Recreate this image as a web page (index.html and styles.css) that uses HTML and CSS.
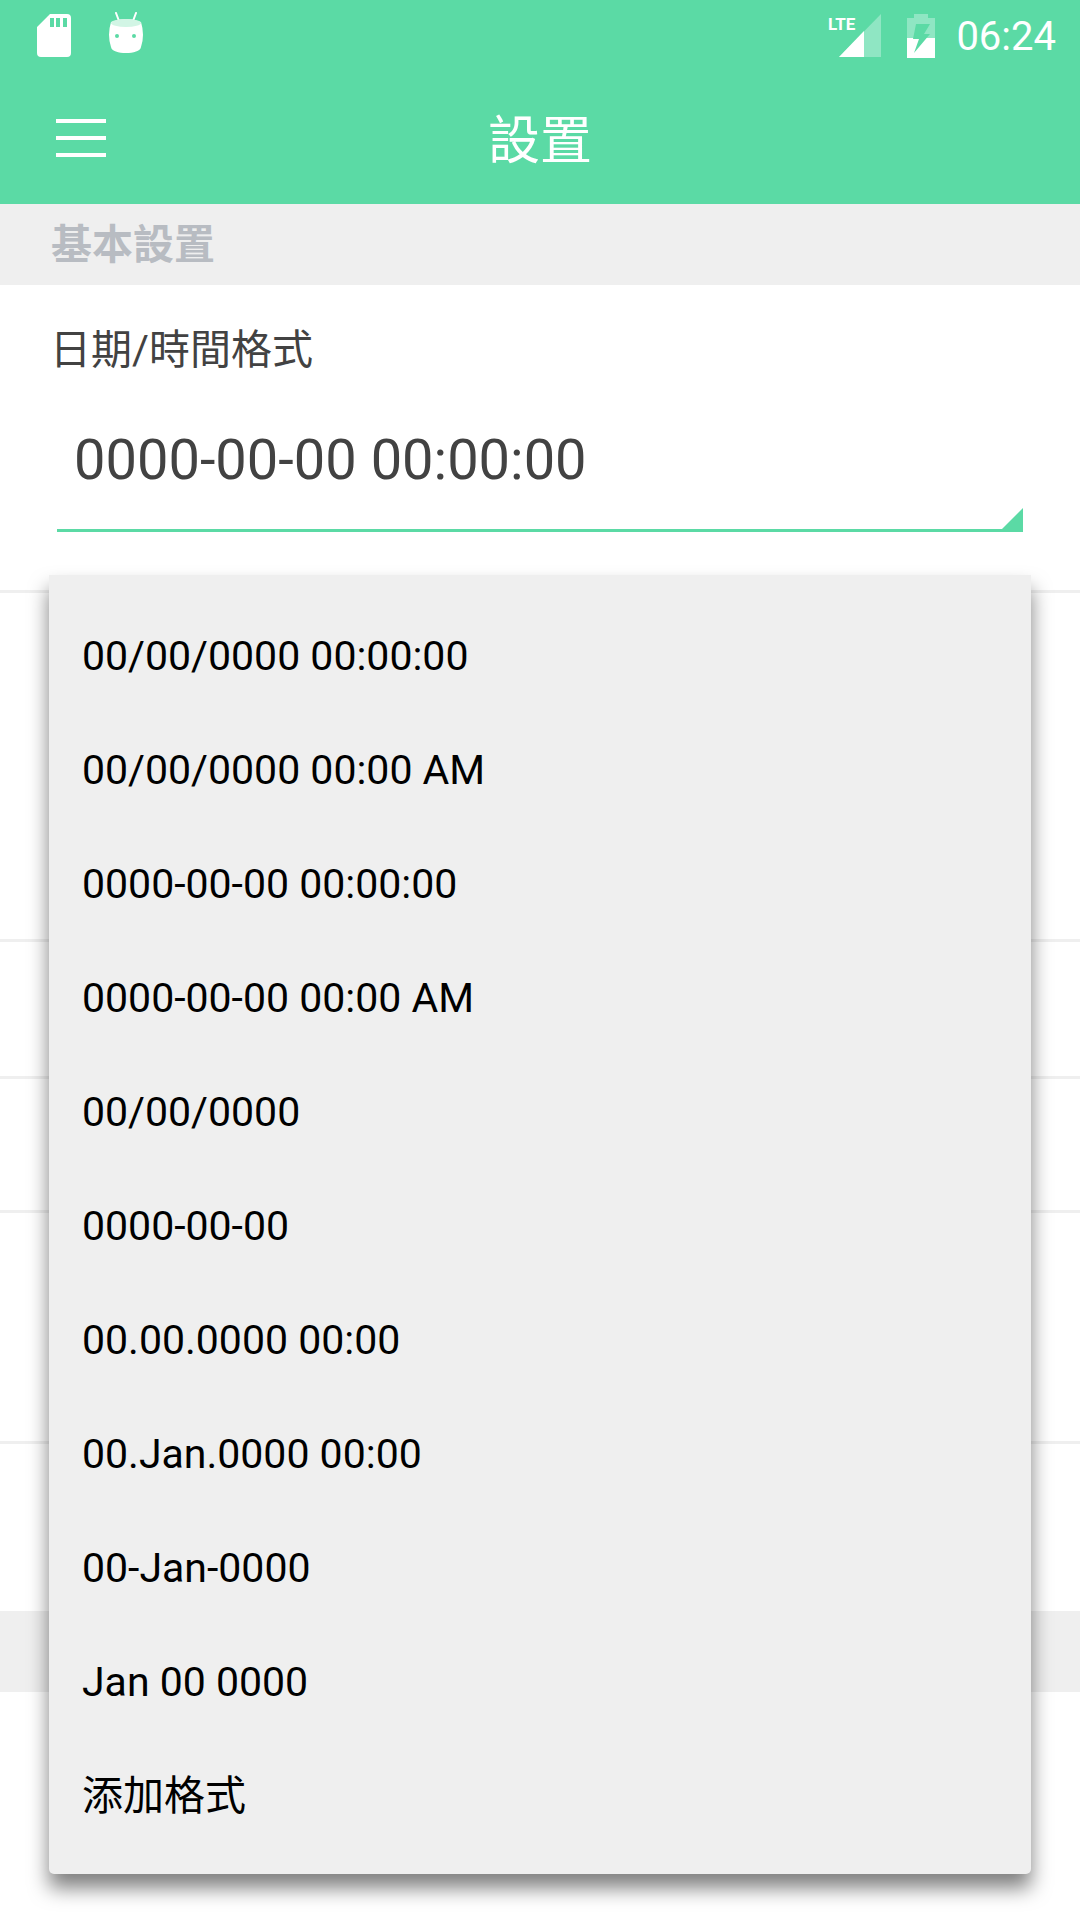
FILE: index.html
```html
<!DOCTYPE html>
<html lang="zh-Hant">
<head>
<meta charset="utf-8">
<meta name="viewport" content="width=device-width, initial-scale=1">
<title>設置</title>
<link rel="stylesheet" href="styles.css">
</head>
<body>
<header class="header">
  <div class="status">
    <svg class="status-sd" width="34" height="43" viewBox="0 0 34 43" aria-hidden="true">
      <path fill="#fff" fill-rule="evenodd" d="M13 0H30Q34 0 34 4V39Q34 43 30 43H4Q0 43 0 39V13ZM13 4V13H17V4ZM19 4V13H23V4ZM26 4V13H30V4Z"/>
    </svg>
    <svg class="status-droid" width="34" height="42" viewBox="0 0 34 42" aria-hidden="true">
      <path d="M7 1L10 9M27 1L24 9" stroke="#fff" stroke-width="2" stroke-linecap="round"/>
      <path fill="#fff" fill-rule="evenodd" d="M2 10Q17 4 32 10Q36 23 32 35C31 43 3 43 2 35Q-2 23 2 10ZM8 22A2 2 0 1 0 8 26A2 2 0 1 0 8 22ZM25 22A2 2 0 1 0 25 26A2 2 0 1 0 25 22Z"/>
      <ellipse cx="17" cy="11" rx="15" ry="4" fill="#d2f5e5"/>
    </svg>
    <svg class="status-signal" width="54" height="46" viewBox="0 0 54 46" role="img" aria-label="LTE">
      <path fill="#8fe6c3" d="M53 2V45H11Z"/>
      <path fill="#fff" d="M36 19V45H11Z"/>
      <text class="lte" x="0" y="18">LTE</text>
    </svg>
    <svg class="status-battery" width="30" height="46" viewBox="0 0 30 46" aria-hidden="true">
      <path fill="#8fe6c3" d="M8 2H22V6H29V26H1V6H8Z"/>
      <path fill="#fff" d="M1 26H29V46H1Z"/>
      <path fill="#5bdaa5" d="M10 12H24L18 22H24L8 41L13 27H7Z"/>
    </svg>
    <time class="clock">06:24</time>
  </div>
  <div class="toolbar">
    <button class="menu-button" type="button" aria-label="Menu"><span></span><span></span><span></span></button>
    <h1 class="title">設置</h1>
  </div>
</header>
<main class="settings">
  <h2 class="section-title">基本設置</h2>
  <section class="setting">
    <div class="setting-label" id="format-label">日期/時間格式</div>
    <div class="picker">
      <button class="spinner" type="button" aria-haspopup="listbox" aria-expanded="true" aria-labelledby="format-label format-value"><span id="format-value">0000-00-00 00:00:00</span></button>
      <ul class="options" role="listbox" aria-labelledby="format-label">
        <li><button class="option" type="button" role="option">00/00/0000 00:00:00</button></li>
        <li><button class="option" type="button" role="option">00/00/0000 00:00 AM</button></li>
        <li><button class="option" type="button" role="option">0000-00-00 00:00:00</button></li>
        <li><button class="option" type="button" role="option">0000-00-00 00:00 AM</button></li>
        <li><button class="option" type="button" role="option">00/00/0000</button></li>
        <li><button class="option" type="button" role="option">0000-00-00</button></li>
        <li><button class="option" type="button" role="option">00.00.0000 00:00</button></li>
        <li><button class="option" type="button" role="option">00.Jan.0000 00:00</button></li>
        <li><button class="option" type="button" role="option">00-Jan-0000</button></li>
        <li><button class="option" type="button" role="option">Jan 00 0000</button></li>
        <li><button class="option" type="button" role="option">添加格式</button></li>
      </ul>
    </div>
  </section>
  <div class="row row-xl"></div>
  <div class="row row-m"></div>
  <div class="row row-s"></div>
  <div class="row row-l"></div>
  <div class="row row-last"></div>
  <div class="section-title"></div>
</main>
</body>
</html>
```
FILE: styles.css
```css
* { box-sizing: border-box; }

body {
  margin: 0;
  min-height: 100vh;
  background: #fff;
  color: #424242;
  font-family: Roboto, "Noto Sans CJK TC", sans-serif;
}

button {
  border: 0;
  padding: 0;
  background: none;
  color: inherit;
  font: inherit;
  text-align: left;
}

.header { background: #5bdaa5; color: #fff; }

.status {
  display: flex;
  height: 72px;
  padding: 12px 24px 0 37px;
}
.status-sd { margin-top: 2px; }
.status-droid { margin-left: 38px; }
.status-signal { margin-left: auto; }
.status-battery { margin-left: 24px; }
.lte { fill: #fff; font: bold 17px Roboto, sans-serif; }
.clock { margin-left: 20px; font-size: 40px; line-height: 50px; }

.toolbar {
  display: grid;
  grid-template-columns: 1fr auto 1fr;
  align-items: center;
  height: 132px;
  padding: 0 56px;
}
.menu-button {
  display: grid;
  gap: 13px;
  width: 50px;
}
.menu-button span { height: 4px; background: #fff; }
.title { margin: 0; padding-top: 8px; font-size: 52px; font-weight: 400; line-height: 72px; }

.section-title {
  height: 81px;
  margin: 0;
  padding: 0 51px;
  background: #efefef;
  color: #b8bcc2;
  font-size: 41px;
  font-weight: 700;
  line-height: 82px;
}

.setting { height: 308px; padding: 41px 57px 0; border-bottom: 3px solid #efefef; }
.setting-label { margin-left: -7px; font-size: 41px; line-height: 48px; }

.picker { position: relative; margin-top: 34px; }
.spinner {
  position: relative;
  display: block;
  width: 100%;
  height: 124px;
  padding: 0 17px 18px;
  border-bottom: 3px solid #5bdaa5;
  font-size: 56px;
}
.spinner::after {
  content: "";
  position: absolute;
  right: 0;
  bottom: 0;
  width: 21px;
  height: 21px;
  background: #5bdaa5;
  clip-path: polygon(100% 0, 100% 100%, 0 100%);
}
.options {
  position: absolute;
  z-index: 1;
  top: 100%;
  left: -8px;
  right: -8px;
  margin: 43px 0 0;
  padding: 24px 0 21px;
  border-radius: 0 0 5px 5px;
  background: #efefef;
  box-shadow: 0 14px 20px rgba(0, 0, 0, .5);
  color: #000;
  list-style: none;
}
.option {
  display: block;
  width: 100%;
  height: 114px;
  padding: 0 33px;
  font-size: 41px;
  line-height: 48px;
}

.row { border-bottom: 3px solid #efefef; }
.row-xl { height: 349px; }
.row-m { height: 137px; }
.row-s { height: 134px; }
.row-l { height: 231px; }
.row-last { height: 167px; border: 0; }
```
